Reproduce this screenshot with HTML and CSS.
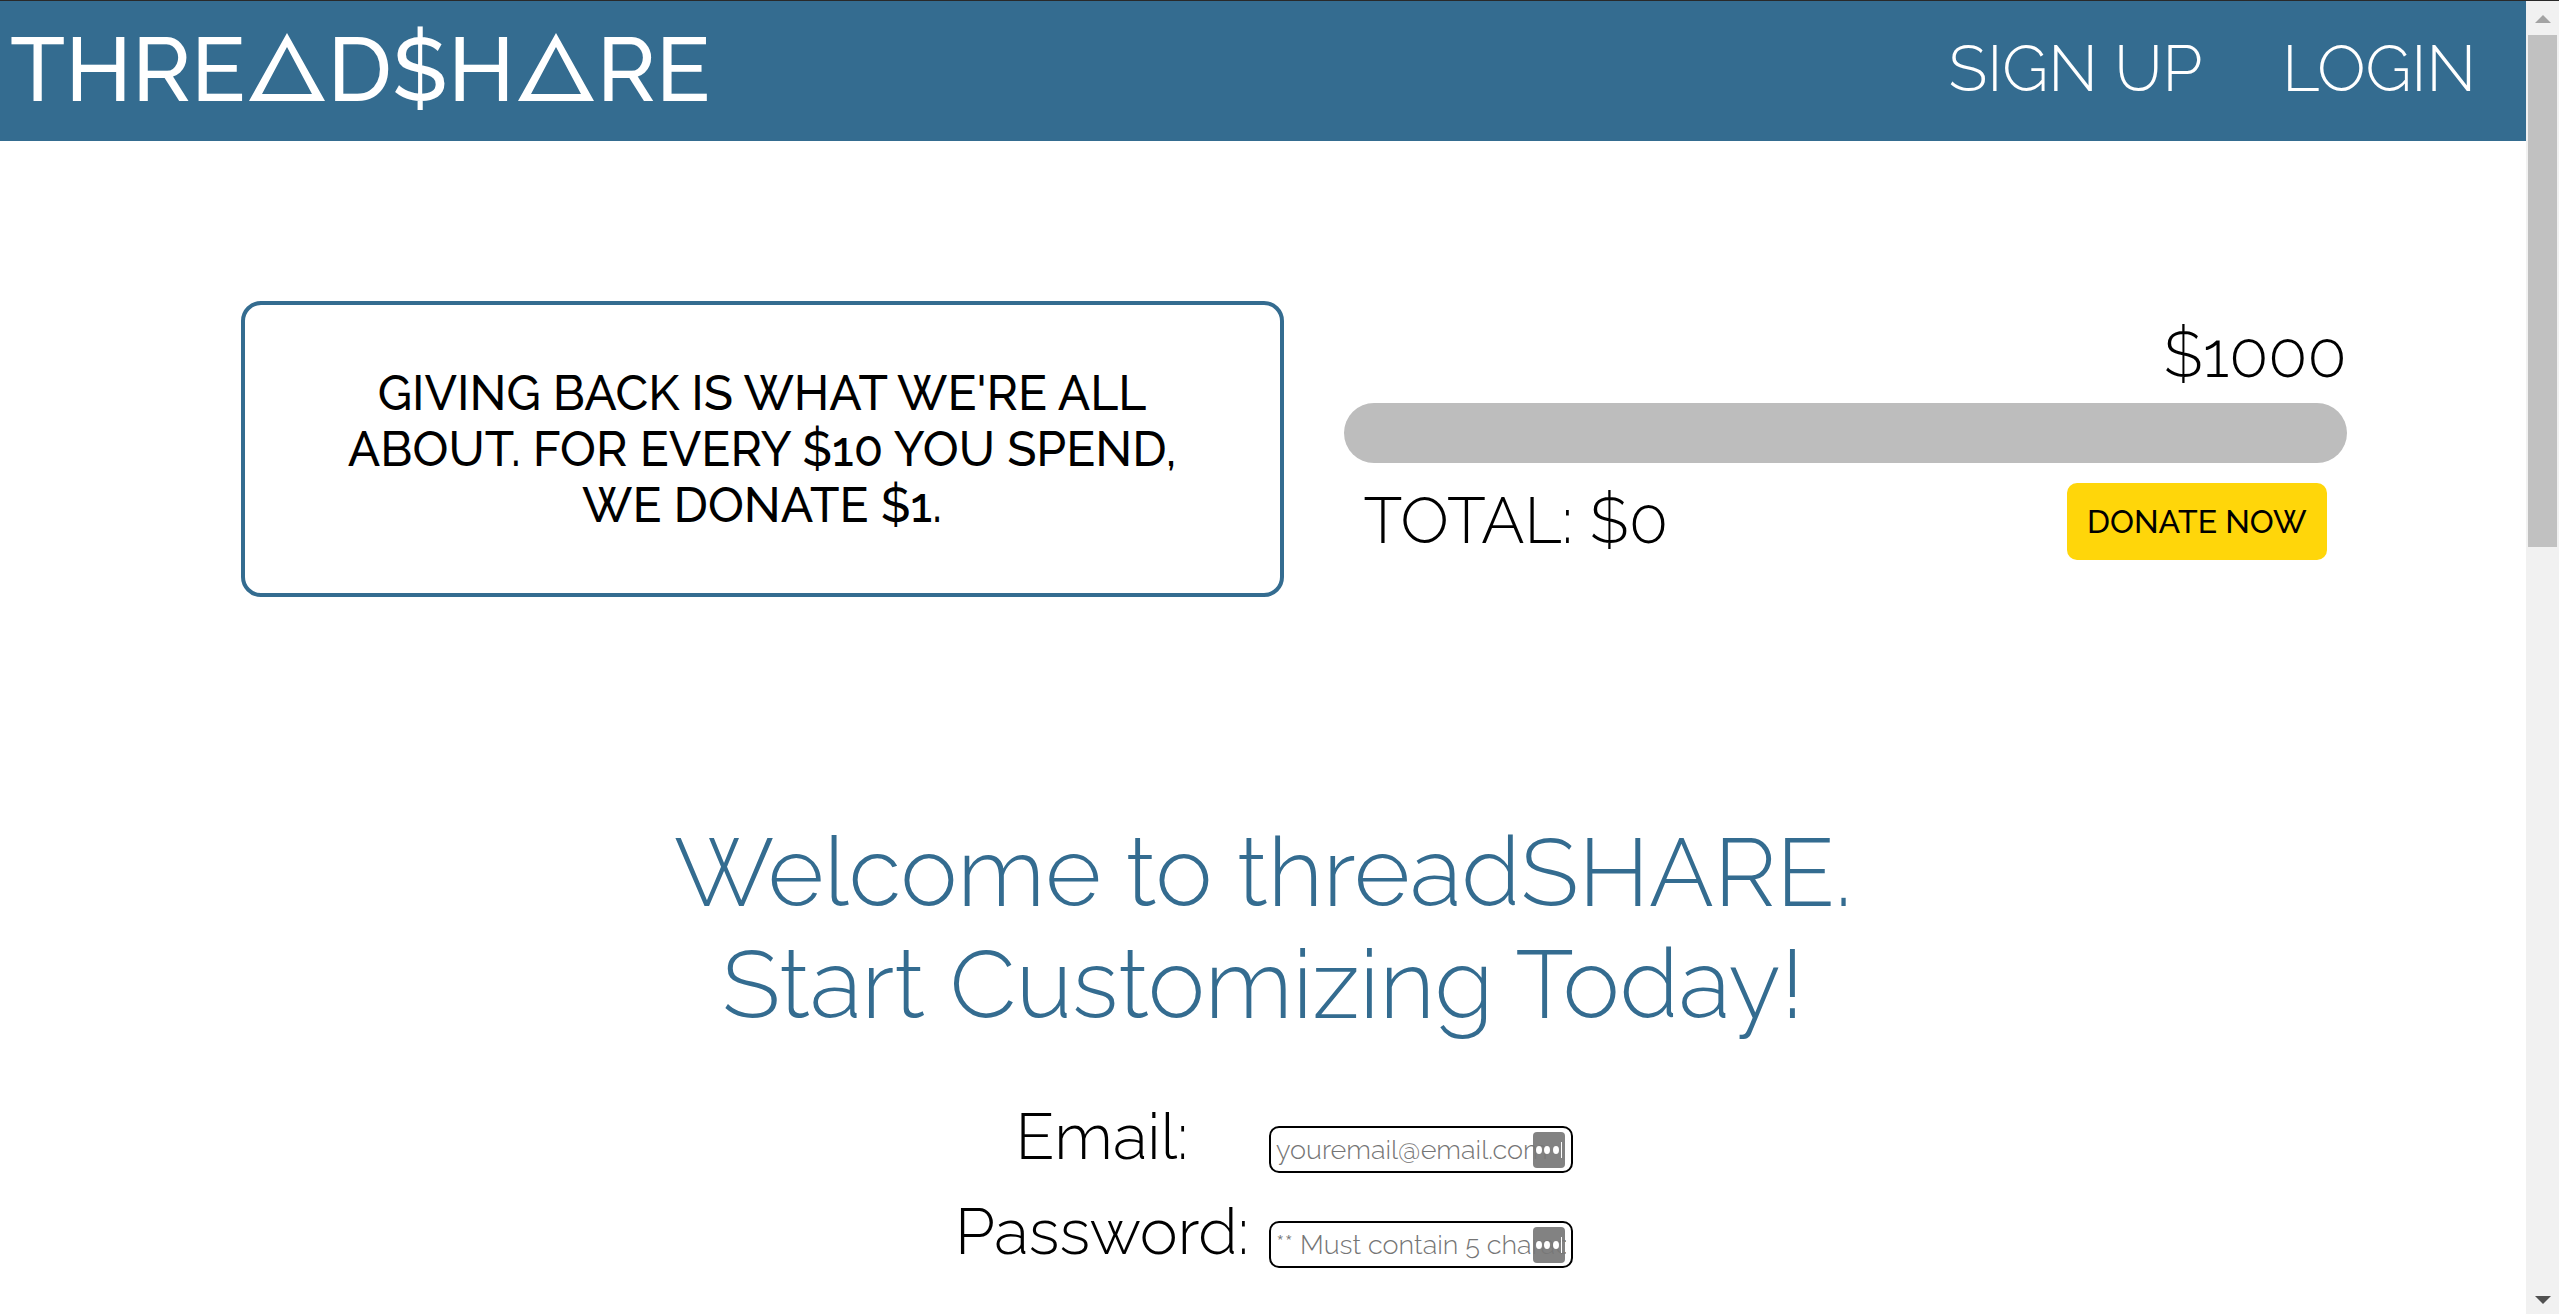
FILE: index.html
```html
<!DOCTYPE html>
<html lang="en">
<head>
<meta charset="utf-8">
<title>threadSHARE</title>
<link rel="stylesheet" href="styles.css">
</head>
<body>
<div class="page">
  <header class="header">
    <a class="logo" href="#">
      <span>THRE</span>
      <svg class="logo-a" viewBox="0 0 76 68" aria-hidden="true"><path fill-rule="evenodd" d="M38 0 76 68H0ZM38 14 13 61H63Z"/></svg>
      <span>D$H</span>
      <svg class="logo-a" viewBox="0 0 76 68" aria-hidden="true"><path fill-rule="evenodd" d="M38 0 76 68H0ZM38 14 13 61H63Z"/></svg>
      <span>RE</span>
    </a>
    <nav class="nav">
      <a href="#">SIGN UP</a>
      <a href="#">LOGIN</a>
    </nav>
  </header>
  <main>
    <section class="giving">
      <p class="pledge">GIVING BACK IS WHAT WE'RE ALL<br>ABOUT. FOR EVERY $10 YOU SPEND,<br>WE DONATE $1.</p>
      <div class="fund">
        <p class="goal">$1000</p>
        <div class="bar"></div>
        <div class="fund-row">
          <p class="total">TOTAL: $0</p>
          <button class="donate" type="button">DONATE NOW</button>
        </div>
      </div>
    </section>
    <h1 class="welcome">Welcome to threadSHARE.<br>Start Customizing Today!</h1>
    <form class="signup">
      <label for="email">Email:</label>
      <div class="field">
        <input id="email" type="email" placeholder="youremail@email.com">
        <svg class="fill" viewBox="0 0 32 36" aria-hidden="true"><rect width="32" height="36" rx="4"/><ellipse cx="6" cy="18" rx="3" ry="4"/><ellipse cx="14" cy="18" rx="3" ry="4"/><ellipse cx="23" cy="18" rx="3" ry="4"/><path d="M28 10h1v16h-1z"/></svg>
      </div>
      <label for="password">Password:</label>
      <div class="field">
        <input id="password" type="password" placeholder="** Must contain 5 characters">
        <svg class="fill" viewBox="0 0 32 36" aria-hidden="true"><rect width="32" height="36" rx="4"/><ellipse cx="6" cy="18" rx="3" ry="4"/><ellipse cx="14" cy="18" rx="3" ry="4"/><ellipse cx="23" cy="18" rx="3" ry="4"/><path d="M28 10h1v16h-1z"/></svg>
      </div>
    </form>
  </main>
</div>
<div class="scrollbar" aria-hidden="true">
  <svg class="arrow up" viewBox="0 0 16 8"><path d="M8 0 16 8H0Z"/></svg>
  <div class="thumb"></div>
  <svg class="arrow down" viewBox="0 0 16 8"><path d="M0 0H16L8 8Z"/></svg>
</div>
</body>
</html>
```
FILE: styles.css
```css
* { box-sizing: border-box; }

body {
  margin: 0;
  display: flex;
  align-items: flex-start;
  border-top: 1px solid #292929;
  background: #fff;
  color: #000;
  font-family: Raleway, Lato, "Open Sans", sans-serif;
  font-weight: 300;
}

p, h1 { margin: 0; }

.page { flex: 1; min-width: 0; }

.header {
  display: flex;
  align-items: center;
  justify-content: space-between;
  height: 140px;
  padding: 0 50px 4px 10px;
  background: #346c90;
}

.header a { color: #fff; text-decoration: none; }

.logo {
  display: flex;
  align-items: baseline;
  gap: 3px;
  font-size: 90px;
  font-weight: 500;
  line-height: 108px;
}

.logo-a { width: 76px; height: 68px; fill: #fff; }

.nav {
  display: flex;
  gap: 80px;
  font-size: 64px;
  line-height: 76px;
}

.giving {
  display: grid;
  grid-template-columns: 1043px 1003px;
  justify-content: center;
  align-items: center;
  column-gap: 60px;
  padding: 160px 0 0 61px;
}

.pledge {
  padding: 60px 20px;
  border: 4px solid #346c90;
  border-radius: 20px;
  font-size: 48px;
  font-weight: 500;
  line-height: 56px;
  text-align: center;
}

.fund { padding-bottom: 22px; }

.goal, .total { font-size: 64px; line-height: 76px; }
.goal { padding-bottom: 10px; text-align: right; }

.bar { height: 60px; border-radius: 30px; background: #bdbdbd; }

.fund-row {
  display: flex;
  align-items: center;
  justify-content: space-between;
  padding: 20px 20px 0;
}

.donate {
  padding: 20px;
  border: 0;
  border-radius: 10px;
  background: #ffd60a;
  color: #000;
  font: inherit;
  font-size: 32px;
  font-weight: 500;
  line-height: 37px;
}

.welcome {
  padding-top: 219px;
  color: #346c90;
  font-size: 96px;
  font-weight: 300;
  line-height: 112px;
  text-align: center;
}

.signup {
  display: grid;
  grid-template-columns: 310px 304px;
  justify-content: center;
  align-items: center;
  column-gap: 12px;
  padding: 49px 6px 0 0;
}

.signup label {
  font-size: 64px;
  line-height: 95px;
  text-align: center;
}

.field { position: relative; padding-top: 26px; }

.field input {
  display: block;
  width: 100%;
  height: 47px;
  padding: 0 5px;
  border: 2px solid #000;
  border-radius: 10px;
  background: #fff;
  font: inherit;
  font-size: 27px;
}

.field input::placeholder { color: #757575; opacity: 1; }

.fill { position: absolute; right: 8px; bottom: 5px; width: 32px; height: 36px; fill: #fff; }
.fill rect { fill: #777; fill-opacity: 0.92; }

.scrollbar {
  position: sticky;
  top: 0;
  display: flex;
  flex-direction: column;
  align-items: center;
  width: 33px;
  height: calc(100vh - 1px);
  padding: 14px 0 10px;
  background: #f1f1f1;
}

.arrow { width: 16px; height: 8px; }
.up { fill: #a3a3a3; }
.down { margin-top: auto; fill: #505050; }
.thumb { width: 29px; height: 39vh; margin-top: 12px; background: #c1c1c1; }
```
